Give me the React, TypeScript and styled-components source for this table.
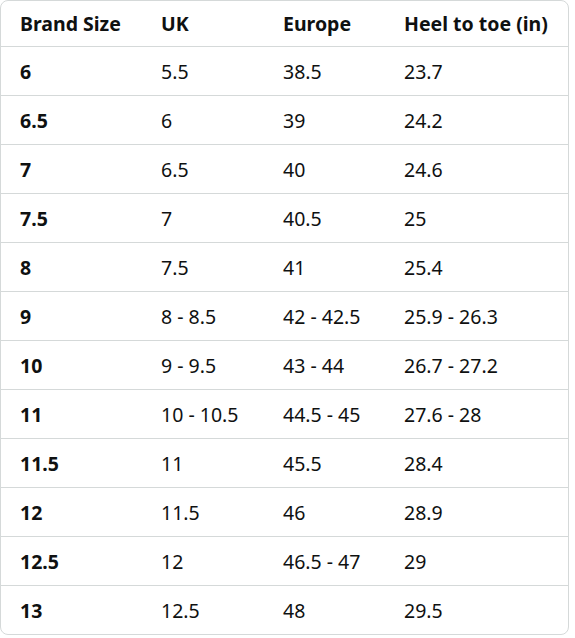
import React from 'react';
import styled, { createGlobalStyle } from 'styled-components';

const GlobalStyle = createGlobalStyle`
  html, body {
    margin: 0;
    padding: 0;
    background: #fff;
  }
  body {
    font-family: 'Noto Sans', 'Open Sans', Arial, sans-serif;
    color: #0f1111;
  }
`;

const headers = ['Brand Size', 'UK', 'Europe', 'Heel to toe (in)'];

// widths of the first three columns, last one takes the rest
const colWidths = [160, 122, 121];

const rows: string[][] = [
  ['6', '5.5', '38.5', '23.7'],
  ['6.5', '6', '39', '24.2'],
  ['7', '6.5', '40', '24.6'],
  ['7.5', '7', '40.5', '25'],
  ['8', '7.5', '41', '25.4'],
  ['9', '8 - 8.5', '42 - 42.5', '25.9 - 26.3'],
  ['10', '9 - 9.5', '43 - 44', '26.7 - 27.2'],
  ['11', '10 - 10.5', '44.5 - 45', '27.6 - 28'],
  ['11.5', '11', '45.5', '28.4'],
  ['12', '11.5', '46', '28.9'],
  ['12.5', '12', '46.5 - 47', '29'],
  ['13', '12.5', '48', '29.5'],
];

export default function App() {
  return (
    <>
      <GlobalStyle />
      <ChartBox>
        <SizeTable>
          <colgroup>
            {colWidths.map((w, i) => (
              <Col key={i} $width={w} />
            ))}
            <Col />
          </colgroup>
          <thead>
            <tr>
              {headers.map((h) => (
                <HeadCell key={h}>{h}</HeadCell>
              ))}
            </tr>
          </thead>
          <tbody>
            {rows.map((r) => (
              <Row key={r[0]}>
                {r.map((v, i) => (
                  <Cell key={i} $bold={i === 0}>
                    {v}
                  </Cell>
                ))}
              </Row>
            ))}
          </tbody>
        </SizeTable>
      </ChartBox>
    </>
  );
}

const ChartBox = styled.div`
  width: 569px;
  box-sizing: border-box;
  border: 1px solid #d5d9d9;
  border-radius: 8px;
  overflow: hidden;
`;

const SizeTable = styled.table`
  width: 100%;
  border-collapse: collapse;
  table-layout: fixed;
  font-size: 19.5px;
`;

const Col = styled.col<{ $width?: number }>`
  width: ${(p) => (p.$width ? `${p.$width}px` : 'auto')};
`;

const HeadCell = styled.th`
  height: 45px;
  padding: 0 0 0 19px;
  text-align: left;
  font-weight: 700;
  white-space: nowrap;
  border-bottom: 1px solid #d5d9d9;

  & + & {
    padding-left: 0;
  }
`;

const Row = styled.tr`
  &:last-child td {
    border-bottom: none;
  }
`;

const Cell = styled.td<{ $bold?: boolean }>`
  height: 48px;
  padding: 0 0 0 19px;
  font-weight: ${(p) => (p.$bold ? 700 : 400)};
  white-space: nowrap;
  border-bottom: 1px solid #d5d9d9;

  & + & {
    padding-left: 0;
  }
`;
